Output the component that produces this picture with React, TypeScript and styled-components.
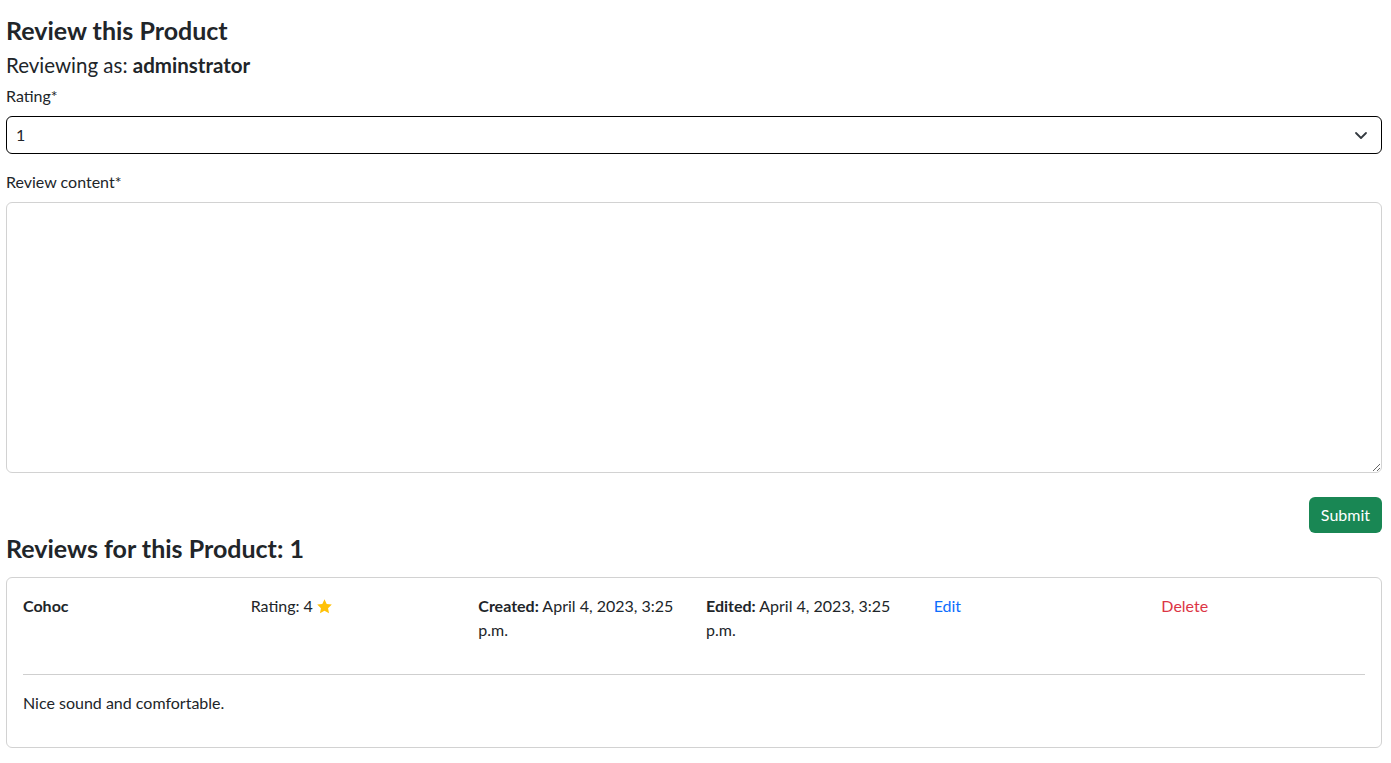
import React from "react";
import styled, { createGlobalStyle } from "styled-components";

const Global = createGlobalStyle`
  * { box-sizing: border-box; }
  body {
    margin: 0;
    font-family: Lato, "Open Sans", sans-serif;
    font-size: 16px;
    line-height: 1.5;
    color: #212529;
    background: #fff;
  }
`;

const Page = styled.div`
  padding: 15px 9px 16px 6px;
`;

const Title = styled.h1`
  margin: 0 0 8px;
  font-size: 25px;
  font-weight: 700;
  line-height: 1.2;
`;

const Subtitle = styled.h2`
  margin: 0 0 6px;
  font-size: 20.5px;
  font-weight: 400;
  line-height: 1.2;
  b { font-weight: 700; }
`;

const Field = styled.div<{ $last?: boolean }>`
  margin-bottom: ${(p) => (p.$last ? "0" : "16px")};
`;

const Label = styled.label`
  display: block;
  margin-bottom: 8px;
  font-size: 16px;
  line-height: 24px;
`;

const SelectWrap = styled.div`
  position: relative;
`;

const Select = styled.select`
  display: block;
  width: 100%;
  height: 38px;
  padding: 6px 36px 6px 9px;
  font-family: inherit;
  font-size: 16px;
  color: #212529;
  background: #fff;
  border: 1px solid #000;
  border-radius: 6px;
  appearance: none;
  outline: none;
`;

const Chevron = styled.svg`
  position: absolute;
  right: 14px;
  top: 50%;
  transform: translateY(-50%);
  pointer-events: none;
`;

const TextArea = styled.textarea`
  display: block;
  width: 100%;
  height: 271px;
  padding: 6px 12px;
  font-family: inherit;
  font-size: 16px;
  border: 1px solid #d2d2d2;
  border-radius: 6px;
  outline: none;
`;

const Actions = styled.div`
  display: flex;
  justify-content: flex-end;
  margin-top: 24px;
`;

const SubmitButton = styled.button`
  height: 36px;
  padding: 0 12px;
  font-family: inherit;
  font-size: 16px;
  color: #fff;
  background: #198754;
  border: none;
  border-radius: 6px;
`;

const SectionTitle = styled.h2`
  margin: 0 0 14px;
  font-size: 25px;
  font-weight: 700;
  line-height: 1.2;
`;

const Card = styled.div`
  border: 1px solid #d2d2d2;
  border-radius: 6px;
  padding: 16px;
`;

const Row = styled.div`
  display: grid;
  grid-template-columns: repeat(6, 1fr);
  column-gap: 24px;
  margin-bottom: 32px;
  font-size: 16px;
  line-height: 24px;
`;

const Cell = styled.div<{ $tone?: "blue" | "red" }>`
  color: ${(p) => (p.$tone === "blue" ? "#0d6efd" : p.$tone === "red" ? "#dc3545" : "#212529")};
  b { font-weight: 700; }
`;

const Star = styled.svg`
  vertical-align: -3px;
  margin-left: 3px;
`;

const Divider = styled.hr`
  margin: 0 0 16px;
  border: 0;
  border-top: 1px solid #cfcfcf;
`;

const Body = styled.p`
  margin: 0 0 16px;
  font-size: 16px;
  line-height: 24px;
`;

export default function App() {
  return (
    <Page>
      <Global />
      <Title>Review this Product</Title>
      <Subtitle>
        Reviewing as: <b>adminstrator</b>
      </Subtitle>
      <Field>
        <Label>Rating*</Label>
        <SelectWrap>
          <Select defaultValue="1">
            <option value="1">1</option>
            <option value="2">2</option>
            <option value="3">3</option>
            <option value="4">4</option>
            <option value="5">5</option>
          </Select>
          <Chevron width="14" height="10" viewBox="0 0 14 10">
            <path d="M2 3l5 5 5-5" fill="none" stroke="#343a40" strokeWidth="1.8" strokeLinecap="round" strokeLinejoin="round" />
          </Chevron>
        </SelectWrap>
      </Field>
      <Field $last>
        <Label>Review content*</Label>
        <TextArea />
      </Field>
      <Actions>
        <SubmitButton>Submit</SubmitButton>
      </Actions>
      <SectionTitle>Reviews for this Product: 1</SectionTitle>
      <Card>
        <Row>
          <Cell><b>Cohoc</b></Cell>
          <Cell>
            Rating: 4
            <Star width="17" height="17" viewBox="0 0 24 24">
              <path d="M12 1.8l3.1 6.6 7.2.9-5.3 5 1.4 7.1L12 17.9l-6.4 3.5 1.4-7.1-5.3-5 7.2-.9z" fill="#ffc107" />
            </Star>
          </Cell>
          <Cell><b>Created:</b> April 4, 2023, 3:25 p.m.</Cell>
          <Cell><b>Edited:</b> April 4, 2023, 3:25 p.m.</Cell>
          <Cell $tone="blue">Edit</Cell>
          <Cell $tone="red">Delete</Cell>
        </Row>
        <Divider />
        <Body>Nice sound and comfortable.</Body>
      </Card>
    </Page>
  );
}
